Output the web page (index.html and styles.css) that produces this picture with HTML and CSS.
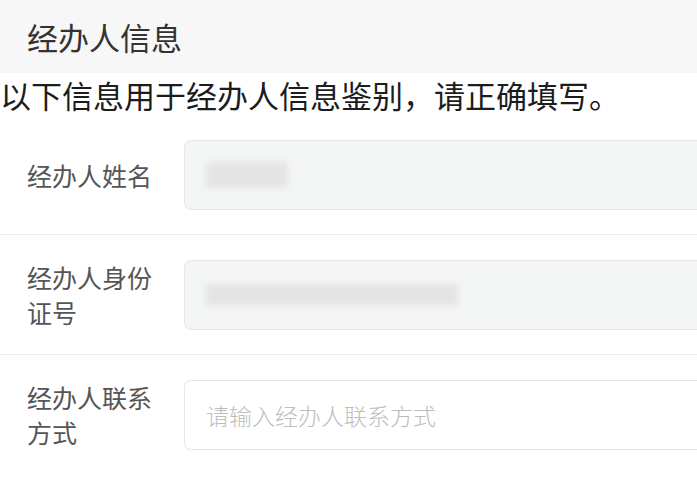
FILE: index.html
```html
<!DOCTYPE html>
<html lang="zh-CN">
<head>
<meta charset="utf-8">
<title>经办人信息</title>
<link rel="stylesheet" href="styles.css">
</head>
<body>
<div class="page">
  <div class="section-title">经办人信息</div>
  <div class="intro">以下信息用于经办人信息鉴别，请正确填写。</div>
  <div class="form">
    <div class="row">
      <div class="label">经办人姓名</div>
      <div class="field disabled"><span class="blur blur-name"></span></div>
    </div>
    <div class="row">
      <div class="label">经办人身份证号</div>
      <div class="field disabled"><span class="blur blur-id"></span></div>
    </div>
    <div class="row last">
      <div class="label">经办人联系方式</div>
      <div class="field"><span class="placeholder">请输入经办人联系方式</span></div>
    </div>
  </div>
</div>
</body>
</html>
```

FILE: styles.css
```css
html, body {
  margin: 0;
  padding: 0;
  background: #ffffff;
}
body {
  font-family: "Noto Sans CJK SC", "Noto Sans", sans-serif;
}
.page {
  width: 697px;
  overflow: hidden;
}
.section-title {
  height: 73px;
  background: #f7f7f7;
  padding-left: 27px;
  display: flex;
  align-items: center;
  font-size: 31px;
  color: #333333;
}
.intro {
  height: 42px;
  display: flex;
  align-items: center;
  font-size: 31px;
  color: #1c1c1c;
  white-space: nowrap;
}
.row {
  display: flex;
  align-items: center;
  padding: 25px 0 24px 27px;
  border-bottom: 1px solid #ececec;
}
.row.last {
  border-bottom: none;
}
.label {
  width: 132px;
  margin-right: 25px;
  flex-shrink: 0;
  font-size: 25px;
  line-height: 35px;
  color: #555555;
}
.field {
  flex: 1;
  height: 68px;
  border: 1px solid #e6e6e6;
  border-right: none;
  border-radius: 7px 0 0 7px;
  background: #ffffff;
  display: flex;
  align-items: center;
  padding-left: 21px;
}
.field.disabled {
  background: #f4f5f5;
}
.placeholder {
  font-size: 23px;
  color: #bdbdbd;
  font-weight: 300;
}
.blur {
  display: block;
  background: #e4e4e4;
  filter: blur(3px);
}
.blur-name {
  width: 82px;
  height: 26px;
}
.blur-id {
  width: 252px;
  height: 22px;
}
```
